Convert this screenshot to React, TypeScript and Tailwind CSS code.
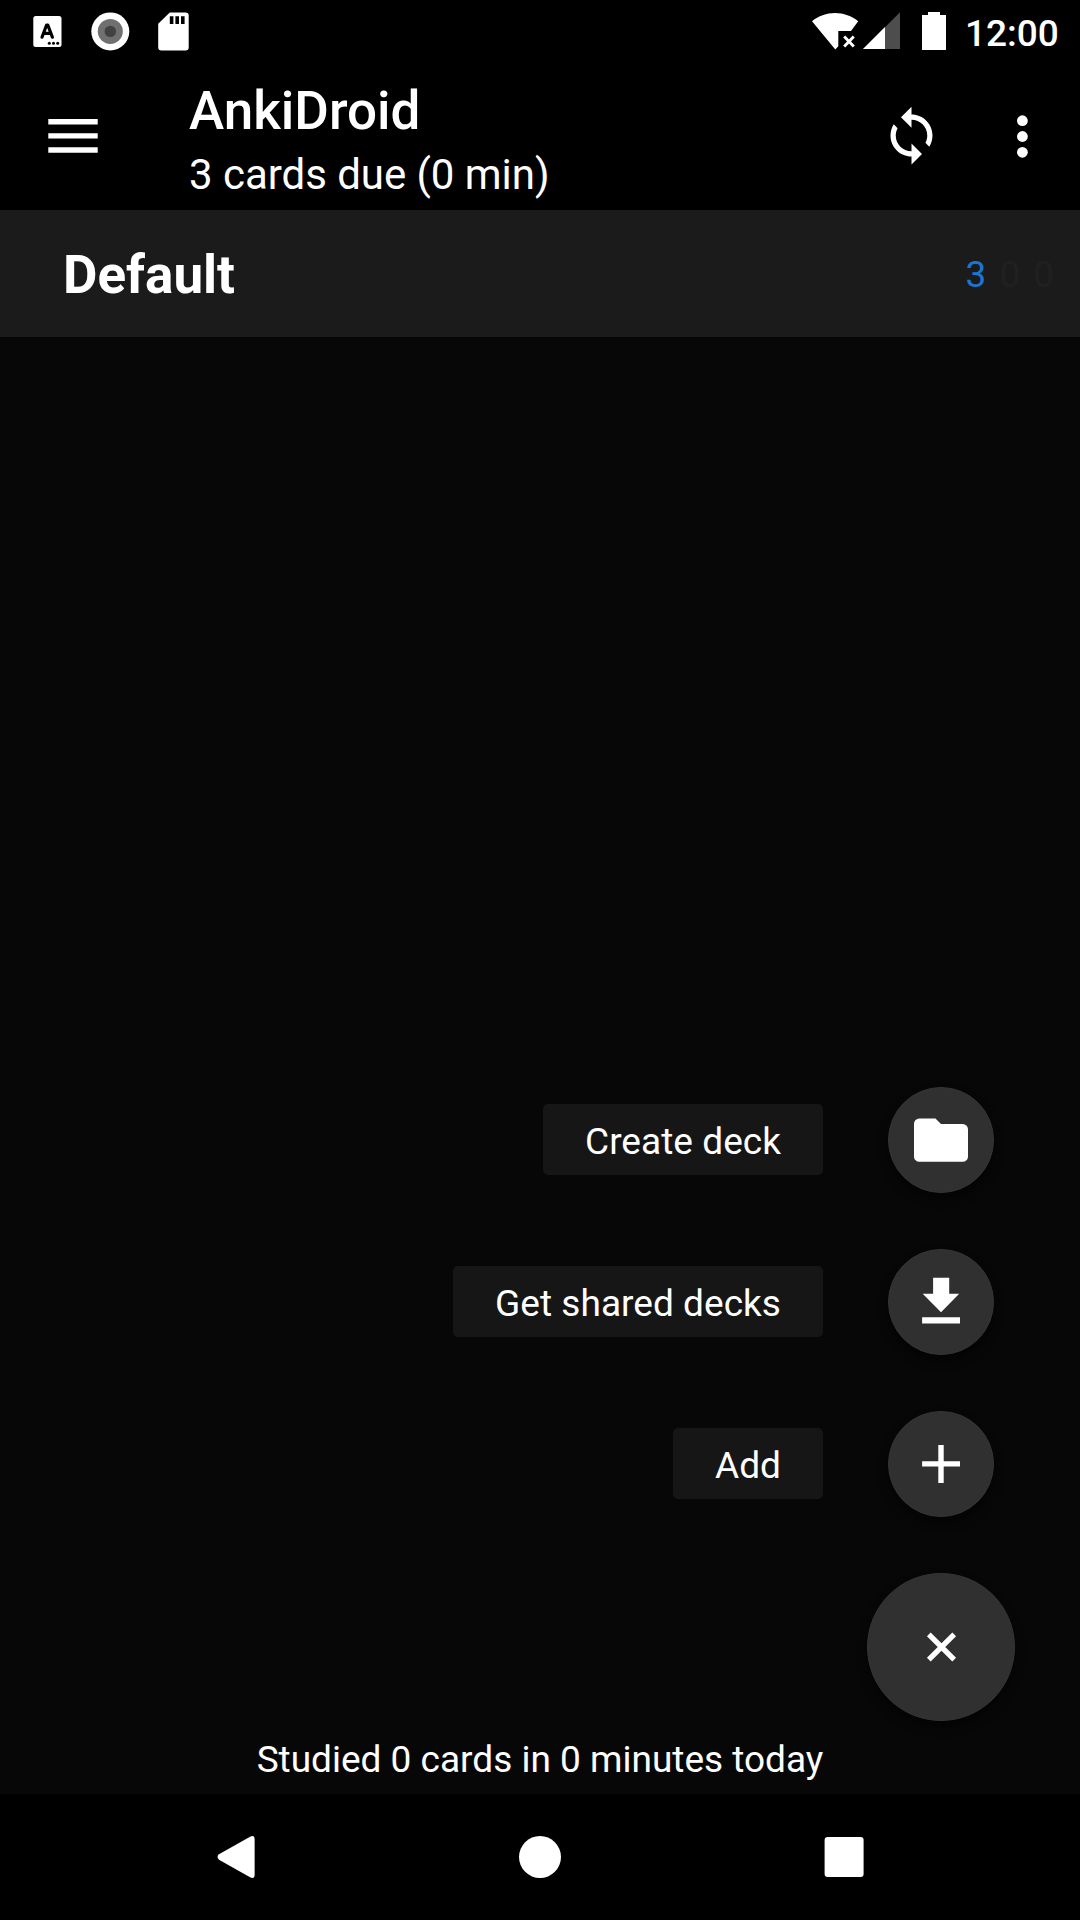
import type { ReactNode } from 'react';

function StatusBar() {
  return (
    <div className="flex h-[63px] shrink-0 items-start justify-between bg-black pl-[31px] pr-[21px]">
      <div className="flex">
        <svg width="35" height="63" viewBox="31 0 35 63" fill="white">
          <rect x="33.3" y="16" width="28.2" height="31" rx="2.5" />
          <path d="M42 37.2L46.6 25h1.2l4.6 12.2M43.8 33.4h6.8" fill="none" stroke="black" strokeWidth="3.2" strokeLinecap="round" strokeLinejoin="round" />
          <circle cx="49.3" cy="43.2" r="1.5" fill="black" />
          <circle cx="53.5" cy="43.2" r="1.5" fill="black" />
          <circle cx="57.7" cy="43.2" r="1.5" fill="black" />
        </svg>
        <svg width="88" height="63" viewBox="66 0 88 63">
          <circle cx="110.3" cy="31.4" r="19" fill="white" />
          <circle cx="110.3" cy="31.4" r="12.5" fill="#707070" />
          <circle cx="110.3" cy="31.4" r="5.7" fill="#424242" />
        </svg>
        <svg width="40" height="63" viewBox="154 0 40 63">
          <path d="M169.8 12.4h15.7a3.2 3.2 0 0 1 3.2 3.2v31.7a3.2 3.2 0 0 1-3.2 3.2h-24.1a3.2 3.2 0 0 1-3.2-3.2V23.8z" fill="white" />
          <path d="M169.8 16.2h3.6v7.9h-3.6zM175.4 16.2h3.6v7.9h-3.6zM181 16.2h3.6v7.9h-3.6z" fill="black" />
        </svg>
      </div>
      <div className="flex">
        <svg width="156" height="63" viewBox="809 0 156 63" fill="white">
          <path d="M812 21.2C818.5 16 826.5 13 835 13s16.8 3 23.2 8.2L851 31h-12.7v15.2L835.3 49.6z" />
          <path d="M844.2 36.6l9.6 9.8M853.8 36.6l-9.6 9.8" stroke="white" strokeWidth="2.9" />
          <path d="M900 12.2V49h-37z" fill="#4d4d4d" />
          <path d="M885 27.1V49h-22z" />
          <path d="M928 12h12v3h6v35h-24V15h6z" />
        </svg>
        <span className="h-[63px] w-[94px] whitespace-nowrap text-[37px] font-medium leading-[67px]">12:00</span>
      </div>
    </div>
  );
}

function Toolbar() {
  return (
    <div className="flex h-[147px] shrink-0 bg-black">
      <button className="flex h-[147px] w-[189px] shrink-0 pl-[42px] pt-[42px]" aria-label="Menu">
        <svg width="63" height="63" viewBox="42 105 63 63" fill="white">
          <path d="M48.3 119h49.4v5.4H48.3zM48.3 133.2h49.4v5.4H48.3zM48.3 147.3h49.4v5.4H48.3z" />
        </svg>
      </button>
      <div className="flex grow flex-col pt-[16px]">
        <h1 className="h-[64px] text-[53px] font-medium leading-[64px]">AnkiDroid</h1>
        <p className="h-[64px] text-[42px] leading-[64px] tracking-[-0.04px]">3 cards due (0 min)</p>
      </div>
      <div className="flex pt-[41px]">
        <svg width="63" height="63" viewBox="0 0 24 24" fill="white" className="mr-[48px]">
          <path d="M12 4V1L8 5l4 4V6c3.31 0 6 2.69 6 6 0 1.01-.25 1.97-.7 2.8l1.46 1.46C19.54 15.03 20 13.57 20 12c0-4.42-3.58-8-8-8zm0 14c-3.31 0-6-2.69-6-6 0-1.01.25-1.97.7-2.8L5.24 7.74C4.46 8.97 4 10.43 4 12c0 4.42 3.58 8 8 8v3l4-4-4-4v3z" />
        </svg>
        <svg width="63" height="63" viewBox="0 0 63 63" fill="white" className="mr-[26px]">
          <circle cx="31.4" cy="16.7" r="5.4" />
          <circle cx="31.4" cy="32.5" r="5.4" />
          <circle cx="31.4" cy="48.3" r="5.4" />
        </svg>
      </div>
    </div>
  );
}

function DeckRow() {
  return (
    <div className="flex h-[127px] shrink-0 justify-between bg-[#1b1b1b] pl-[63px] pr-[26px]">
      <span className="text-[53px] font-bold leading-[131px]">Default</span>
      <div className="flex gap-[13px] text-[37px] leading-[129px]">
        <span className="text-[#1976d2]">3</span>
        <span className="text-[#202020]">0</span>
        <span className="text-[#202020]">0</span>
      </div>
    </div>
  );
}

function DialAction({ label, children }: { label: string; children: ReactNode }) {
  return (
    <div className="flex h-[106px] items-start justify-end pr-[21px]">
      <span className="mr-[65px] mt-[17px] h-[71px] whitespace-nowrap rounded-[5px] bg-[#161616] px-[42px] text-[37px] leading-[75px] tracking-[0.04px]">
        {label}
      </span>
      <button className="flex size-[106px] items-center justify-center rounded-full border border-[#353535] bg-[#303030] shadow-[0_6px_10px_rgba(0,0,0,0.5)]" aria-label={label}>
        <svg width="64" height="64" viewBox="0 0 64 64" fill="white">
          {children}
        </svg>
      </button>
    </div>
  );
}

function NavBar() {
  return (
    <div className="flex h-[126px] shrink-0 items-center justify-between bg-black pl-[217px] pr-[216px]">
      <svg width="38" height="44" viewBox="0 0 38 44" fill="white">
        <path d="M2 19.3L33.5 1.5Q37.6 0 37.6 4V40Q37.6 44 33.5 42.5L2 24.7Q-1 22 2 19.3z" />
      </svg>
      <svg width="44" height="44" viewBox="0 0 44 44" fill="white" className="ml-[22px]">
        <circle cx="22" cy="22" r="21" />
      </svg>
      <svg width="40" height="42" viewBox="0 0 40 42" fill="white" className="ml-[22px]">
        <rect x="0.6" y="1" width="39" height="40" rx="3" />
      </svg>
    </div>
  );
}

export default function App() {
  return (
    <div className="flex h-[1920px] w-[1080px] flex-col overflow-hidden bg-[#070707] font-['Roboto',sans-serif] text-white">
      <StatusBar />
      <Toolbar />
      <DeckRow />
      <main className="flex grow flex-col justify-end">
        <div className="flex flex-col items-end gap-[56px] pr-[65px]">
          <DialAction label="Create deck">
            <path d="M10.3 10.4H26.5L32 15.9H53.7a5.3 5.3 0 0 1 5.3 5.3v27.300a5.3 5.3 0 0 1-5.3 5.3H10.3a5.3 5.3 0 0 1-5.3-5.3V15.700a5.3 5.3 0 0 1 5.3-5.300z" />
          </DialAction>
          <DialAction label="Get shared decks">
            <path d="M50.2 23.7H40.2V7.7H24.1V23.7H13.7L32 42.2zM13.1 47.3v6.2H51v-6.2z" />
          </DialAction>
          <DialAction label="Add">
            <path d="M51 34.6H34.7v16.300h-5.4V34.6H13.1v-5.4h16.2V13h5.4v16.2H51z" />
          </DialAction>
          <button className="flex size-[148px] items-center justify-center rounded-full border border-[#353535] bg-[#303030] shadow-[0_6px_10px_rgba(0,0,0,0.5)]" aria-label="Close">
            <svg width="64" height="64" viewBox="0 0 64 64" fill="none" stroke="white" strokeWidth="5.3">
              <path d="M19.8 19.3l25.4 25.4M45.2 19.3L19.8 44.7" />
            </svg>
          </button>
        </div>
        <p className="h-[73px] text-center text-[37px] leading-[77px]">Studied 0 cards in 0 minutes today</p>
      </main>
      <NavBar />
    </div>
  );
}
